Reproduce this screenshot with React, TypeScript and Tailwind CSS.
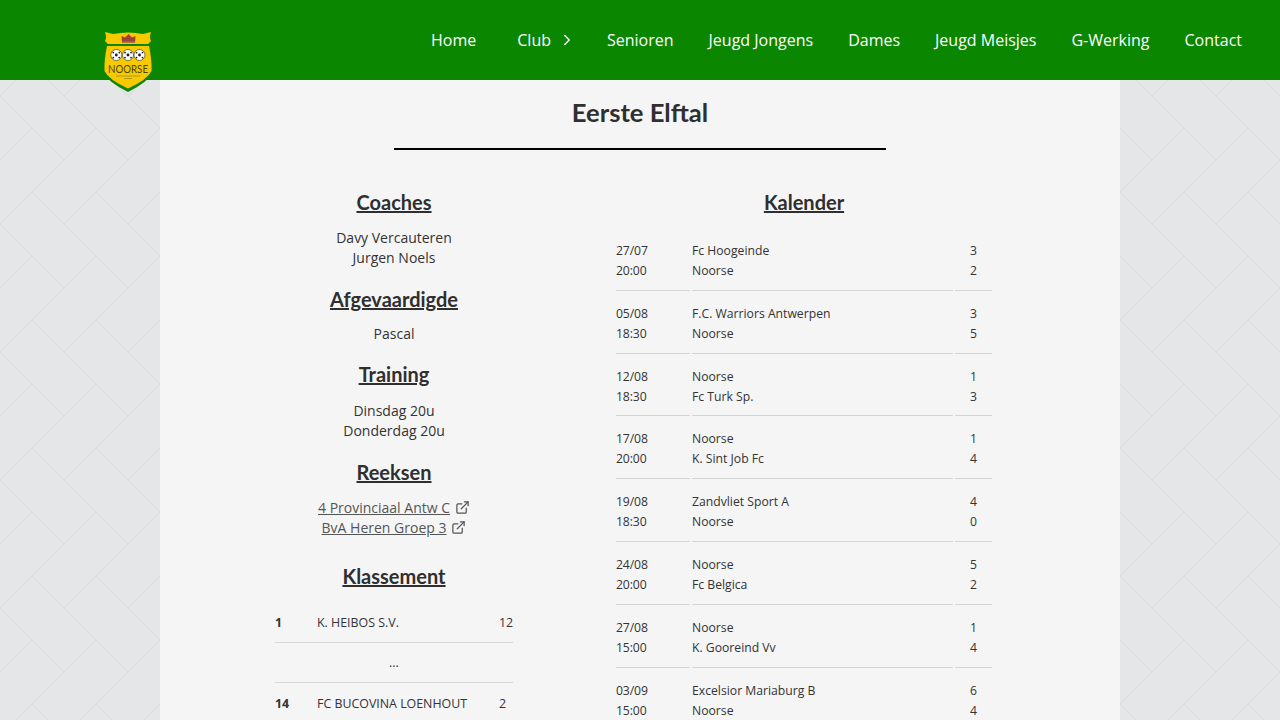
import { ChevronRight, ExternalLink } from "lucide-react";

const navItems = ["Senioren", "Jeugd Jongens", "Dames", "Jeugd Meisjes", "G-Werking", "Contact"];

const matches = [
  { date: "27/07", time: "20:00", home: "Fc Hoogeinde", away: "Noorse", homeGoals: 3, awayGoals: 2 },
  { date: "05/08", time: "18:30", home: "F.C. Warriors Antwerpen", away: "Noorse", homeGoals: 3, awayGoals: 5 },
  { date: "12/08", time: "18:30", home: "Noorse", away: "Fc Turk Sp.", homeGoals: 1, awayGoals: 3 },
  { date: "17/08", time: "20:00", home: "Noorse", away: "K. Sint Job Fc", homeGoals: 1, awayGoals: 4 },
  { date: "19/08", time: "18:30", home: "Zandvliet Sport A", away: "Noorse", homeGoals: 4, awayGoals: 0 },
  { date: "24/08", time: "20:00", home: "Noorse", away: "Fc Belgica", homeGoals: 5, awayGoals: 2 },
  { date: "27/08", time: "15:00", home: "Noorse", away: "K. Gooreind Vv", homeGoals: 1, awayGoals: 4 },
  { date: "03/09", time: "15:00", home: "Excelsior Mariaburg B", away: "Noorse", homeGoals: 6, awayGoals: 4 },
];

function Logo() {
  return (
    <svg className="absolute left-[102px] top-[30px] z-10 overflow-visible" width="52" height="62" viewBox="0 0 52 62">
      <path
        d="M1 0 L10 2 Q26 -1 42 2 L51 0 Q49 8 51 11 L49 15 Q52 30 51.5 42 Q46 52 26 62 Q6 52 0.5 42 Q0 30 3 15 L1 11 Q3 8 1 0 Z"
        fill="#0a8600"
      />
      <path d="M3 2 L11 4 Q26 1 41 4 L49 2 Q47 8 49 11 L46 14 L6 14 L3 11 Q5 8 3 2 Z" fill="#f9c900" />
      <path d="M5 16 L47 16 Q50 30 49.5 41 Q45 50 26 58.5 Q7 50 2.5 41 Q2 30 5 16 Z" fill="#f9c900" />
      <path d="M20 12.5 L19.5 6 L23 7.5 L26.5 4 L30 7.5 L33.5 6 L33 12.5 Z" fill="#a0403a" />
      <rect x="20.5" y="11.5" width="12" height="1.5" fill="#b9762c" />
      {[14.3, 26, 37.5].map((cx) => (
        <g key={cx}>
          <circle cx={cx} cy="25" r="5.5" fill="#ffffff" stroke="#2a2a1a" strokeWidth="0.6" />
          <circle cx={cx} cy="25" r="1.4" fill="#1c1c1c" />
          <circle cx={cx - 3} cy="22.6" r="0.9" fill="#1c1c1c" />
          <circle cx={cx + 3} cy="22.6" r="0.9" fill="#1c1c1c" />
          <circle cx={cx - 3} cy="27.6" r="0.9" fill="#1c1c1c" />
          <circle cx={cx + 3} cy="27.6" r="0.9" fill="#1c1c1c" />
        </g>
      ))}
      <text
        x="26"
        y="42.5"
        textAnchor="middle"
        fontSize="11.5"
        textLength="40"
        lengthAdjust="spacingAndGlyphs"
        fill="#4a4410"
        fontFamily="Lato, sans-serif"
      >
        NOORSE
      </text>
      <rect x="14" y="45.5" width="24" height="1" fill="#b09a20" />
      <rect x="22" y="48" width="8" height="1" fill="#b09a20" />
    </svg>
  );
}

function Heading({ children }: { children: string }) {
  return (
    <h2 className="font-['Lato',sans-serif] text-[20px] font-bold leading-[24px] text-[#2f2f2f] underline">
      {children}
    </h2>
  );
}

export default function App() {
  return (
    <div className="relative h-[720px] overflow-hidden bg-[#e5e6e8] font-['Open_Sans',sans-serif] text-[#333333]">
      <svg className="absolute inset-0 h-full w-full">
        <defs>
          <pattern id="herringbone" width="64" height="128" patternUnits="userSpaceOnUse">
            <path
              d="M32 64 L64 96 M0 96 L32 128 M32 0 L64 32 M0 96 L64 32 M0 32 L32 0"
              stroke="#dedfe1"
              strokeWidth="1.6"
              fill="none"
            />
          </pattern>
        </defs>
        <rect width="100%" height="100%" fill="url(#herringbone)" />
      </svg>

      <nav className="relative z-10 flex h-20 items-center justify-end bg-[#0a8600] pr-[38px] text-[16px] text-white">
        <a className="mr-[41px]">Home</a>
        <a className="mr-[31px] flex items-center">
          Club
          <ChevronRight className="ml-[7px] h-[18px] w-[18px]" strokeWidth={2} />
        </a>
        <div className="flex gap-[35px]">
          {navItems.map((item) => (
            <a key={item}>{item}</a>
          ))}
        </div>
      </nav>
      <Logo />

      <main className="relative mx-auto w-[960px] bg-[#f5f5f5] pt-[16px]">
        <h1 className="text-center font-['Lato',sans-serif] text-[25.6px] font-bold leading-[32px] text-[#2f2f2f]">
          Eerste Elftal
        </h1>
        <hr className="mx-auto mt-[20px] w-[492px] border-t-2 border-black" />

        <div className="mt-[40px] flex pl-[74px]">
          <section className="w-[320px] text-center text-[14px] leading-[20px]">
            <Heading>Coaches</Heading>
            <p className="mt-[14px]">
              Davy Vercauteren
              <br />
              Jurgen Noels
            </p>
            <div className="mt-[19px]">
              <Heading>Afgevaardigde</Heading>
            </div>
            <p className="mt-[13px]">Pascal</p>
            <div className="mt-[18px]">
              <Heading>Training</Heading>
            </div>
            <p className="mt-[15px]">
              Dinsdag 20u
              <br />
              Donderdag 20u
            </p>
            <div className="mt-[19px]">
              <Heading>Reeksen</Heading>
            </div>
            <p className="mt-[14px] text-[#555555]">
              <a className="underline">4 Provinciaal Antw C</a>
              <ExternalLink className="ml-[5px] inline h-[15px] w-[15px] align-[-2px]" />
              <br />
              <a className="underline">BvA Heren Groep 3</a>
              <ExternalLink className="ml-[5px] inline h-[15px] w-[15px] align-[-2px]" />
            </p>
            <div className="mt-[26px]">
              <Heading>Klassement</Heading>
            </div>
            <table className="mx-auto mt-[14px] w-[238px] table-fixed border-collapse text-left text-[12.4px]">
              <tbody>
                <tr className="h-[40px] border-b border-[#d5d5d5]">
                  <td className="w-[42px] pt-[2px] font-bold">1</td>
                  <td className="w-[182px] pt-[2px]">K. HEIBOS S.V.</td>
                  <td className="pt-[2px]">12</td>
                </tr>
                <tr className="h-[40px] border-b border-[#d5d5d5]">
                  <td colSpan={3} className="pt-[1px] text-center">
                    ...
                  </td>
                </tr>
                <tr className="h-[44px]">
                  <td className="font-bold">14</td>
                  <td>FC BUCOVINA LOENHOUT</td>
                  <td>2</td>
                </tr>
              </tbody>
            </table>
          </section>

          <section className="w-[500px] text-center">
            <Heading>Kalender</Heading>
            <table className="mx-auto mt-[14px] w-[380px] table-fixed border-separate border-spacing-[2px] text-left text-[12.2px] leading-[19.9px]">
              <tbody>
                {matches.map((m) => (
                  <tr key={m.date + m.time}>
                    <td className="w-[74px] border-b border-[#d5d5d5] pb-[9px] pt-[11px] tracking-[-0.1px]">
                      {m.date}
                      <br />
                      {m.time}
                    </td>
                    <td className="w-[261px] border-b border-[#d5d5d5] pb-[9px] pt-[11px]">
                      {m.home}
                      <br />
                      {m.away}
                    </td>
                    <td className="border-b border-[#d5d5d5] pb-[9px] pt-[11px] text-center">
                      {m.homeGoals}
                      <br />
                      {m.awayGoals}
                    </td>
                  </tr>
                ))}
              </tbody>
            </table>
          </section>
        </div>
      </main>
    </div>
  );
}
